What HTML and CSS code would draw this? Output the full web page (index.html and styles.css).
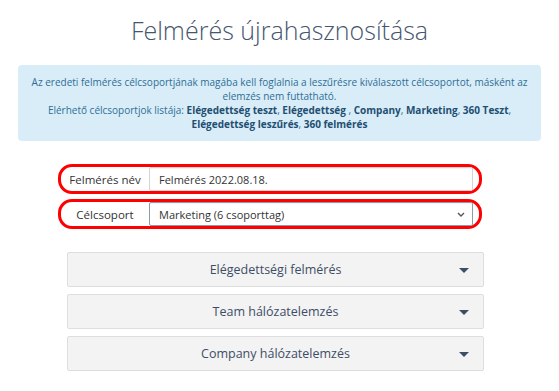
FILE: index.html
```html
<!DOCTYPE html>
<html lang="hu">
<head>
    <meta charset="UTF-8">
    <meta name="viewport" content="width=device-width, initial-scale=1.0">
    <title>Felmérés újrahasznosítása</title>
<link rel="stylesheet" href="styles.css">
</head>
<body>
    <h1 class="title">Felmérés újrahasznosítása</h1>
    <div class="info">
        <p>Az eredeti felmérés célcsoportjának magába kell foglalnia a leszűrésre kiválaszott célcsoportot, másként az elemzés nem futtatható.</p>
        <p>Elérhető célcsoportjok listája: <b>Elégedettség teszt</b>, <b>Elégedettség</b> , <b>Company</b>, <b>Marketing</b>, <b>360 Teszt</b>, <b>Elégedettség leszűrés</b>, <b>360 felmérés</b></p>
    </div>
    <div class="form">
        <div class="row">
            <div class="row-label">Felmérés név</div>
            <div class="field">Felmérés 2022.08.18.</div>
        </div>
        <div class="row">
            <div class="row-label">Célcsoport</div>
            <div class="field select">
                Marketing (6 csoporttag)
                <svg class="chev" width="8" height="5" viewBox="0 0 8 5"><path d="M1 1 L4 4 L7 1" fill="none" stroke="#555" stroke-width="1.4"/></svg>
            </div>
        </div>
    </div>
    <div class="panels">
        <div class="panel">Elégedettségi felmérés<span class="caret"></span></div>
        <div class="panel">Team hálózatelemzés<span class="caret"></span></div>
        <div class="panel">Company hálózatelemzés<span class="caret"></span></div>
    </div>
</body>
</html>
```
FILE: styles.css
```css
* {
    margin: 0;
    padding: 0;
    box-sizing: border-box;
}
body {
    background: white;
    font-family: "Open Sans", "Noto Sans", sans-serif;
    width: 559px;
    height: 391px;
    overflow: hidden;
}
.title {
    text-align: center;
    font-size: 25px;
    font-weight: 300;
    color: #45566f;
    line-height: 36px;
    padding-top: 12px;
}
.info {
    margin: 17px 18px 0 18px;
    height: 76px;
    background: #d9edf8;
    border-radius: 4px;
    color: #2e6e96;
    font-size: 10px;
    line-height: 14px;
    text-align: center;
    padding: 10px 6px 0 6px;
}
.info b {
    color: #1f4f72;
    font-weight: 700;
}
.form {
    margin: 23px 0 0 58px;
    width: 424px;
}
.row {
    height: 30px;
    border: 3px solid #f00;
    border-radius: 14px;
    display: flex;
    align-items: center;
    margin-bottom: 5px;
}
.row-label {
    width: 88px;
    text-align: center;
    font-size: 11.5px;
    color: #333;
}
.field {
    width: 324px;
    height: 24px;
    border: 1px solid #d4d4d4;
    border-radius: 2px;
    background: white;
    font-size: 11px;
    color: #333;
    display: flex;
    align-items: center;
    padding-left: 9px;
    box-shadow: inset 0 1px 1px rgba(0,0,0,0.05);
}
.select {
    border-color: #8d9aac;
    position: relative;
}
.chev {
    position: absolute;
    right: 7px;
    top: 9px;
}
.panels {
    margin: 23px 0 0 67px;
    width: 417px;
}
.panel {
    height: 35px;
    margin-bottom: 7px;
    background: #f3f3f3;
    border: 1px solid #dedede;
    border-radius: 2px;
    display: flex;
    justify-content: center;
    align-items: center;
    font-size: 12.5px;
    color: #3e4d66;
    position: relative;
}
.caret {
    position: absolute;
    right: 14px;
    top: 15px;
    width: 0;
    height: 0;
    border-left: 5px solid transparent;
    border-right: 5px solid transparent;
    border-top: 5px solid #3e4d66;
}
```
